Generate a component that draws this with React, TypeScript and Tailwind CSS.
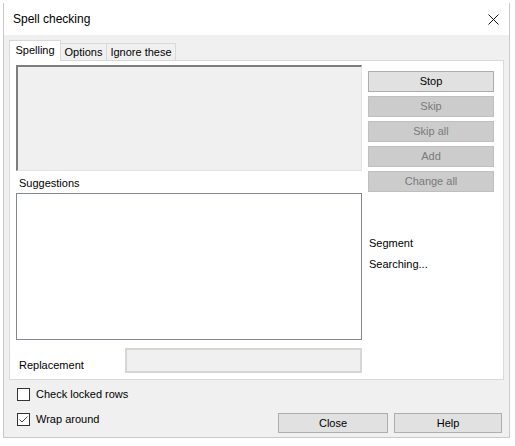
import React from 'react';

const sideButtons = [
  { label: 'Stop', enabled: true },
  { label: 'Skip', enabled: false },
  { label: 'Skip all', enabled: false },
  { label: 'Add', enabled: false },
  { label: 'Change all', enabled: false },
];

function CheckBox({ checked, label }: { checked?: boolean; label: string }) {
  return (
    <div className="flex items-center h-[13px]">
      <div className="w-[13px] h-[13px] border border-[#333333] bg-white flex items-center justify-center">
        {checked && (
          <svg width="11" height="11" viewBox="0 0 11 11">
            <polyline points="1.5,5.5 4,8 9.5,2.5" fill="none" stroke="#444444" strokeWidth="1" />
          </svg>
        )}
      </div>
      <span className="ml-[6px] leading-[13px]">{label}</span>
    </div>
  );
}

export default function App() {
  return (
    <div className="w-[515px] h-[446px] bg-white text-[11px] text-black font-['Liberation_Sans',Arial,sans-serif] overflow-hidden">
      <div className="ml-[3px] mt-[3px] w-[507px] border-x border-[#c9c9c9]">
        {/* title bar */}
        <div className="h-[32px] bg-white flex items-center justify-between pl-[9px] pr-[9px]">
          <span className="text-[12px]">Spell checking</span>
          <svg width="11" height="11" viewBox="0 0 11 11" className="mr-[1px]">
            <line x1="0.5" y1="0.5" x2="10.5" y2="10.5" stroke="#111" strokeWidth="1" />
            <line x1="10.5" y1="0.5" x2="0.5" y2="10.5" stroke="#111" strokeWidth="1" />
          </svg>
        </div>

        {/* body */}
        <div className="h-[403px] bg-[#f0f0f0] border-b border-[#c9c9c9] pt-[5px] pl-[5px]">
          {/* tabs */}
          <div className="flex items-end h-[20px]">
            <div className="relative z-10 w-[52px] h-[21px] -mb-px bg-white border border-b-0 border-[#d9d9d9] flex items-center justify-center pb-[2px]">
              Spelling
            </div>
            <div className="w-[46px] h-[17px] bg-[#f0f0f0] border border-l-0 border-b-0 border-[#d9d9d9] flex items-center justify-center">
              Options
            </div>
            <div className="w-[69px] h-[17px] bg-[#f0f0f0] border border-l-0 border-b-0 border-[#d9d9d9] flex items-center justify-center">
              Ignore these
            </div>
          </div>

          {/* tab panel */}
          <div className="w-[495px] h-[320px] bg-white border border-[#d9d9d9] pl-[6px] pt-[4px] flex">
            <div className="w-[346px] flex flex-col">
              <div className="h-[106px] bg-[#f0f0f0] border-t-2 border-l-2 border-r border-b border-t-[#7d7d7d] border-l-[#7d7d7d] border-r-[#e3e3e3] border-b-[#e3e3e3]" />
              <div className="h-[22px] flex items-center pl-[3px] pt-[3px]">Suggestions</div>
              <div className="h-[147px] bg-white border border-[#828790]" />
              <div className="mt-[8px] flex items-end">
                <div className="w-[109px] pl-[3px] pb-[1px] leading-[13px]">Replacement</div>
                <div className="w-[237px] h-[25px] bg-[#f0f0f0] border-2 border-[#d6d6d6]" />
              </div>
            </div>

            <div className="ml-[6px] w-[126px] flex flex-col">
              <div className="mt-[6px] flex flex-col gap-[4px]">
                {sideButtons.map((b) => (
                  <div
                    key={b.label}
                    className={
                      b.enabled
                        ? 'h-[21px] bg-[#e1e1e1] border border-[#adadad] flex items-center justify-center'
                        : 'h-[21px] bg-[#cccccc] border border-[#bfbfbf] text-[#7a7a7a] flex items-center justify-center'
                    }
                  >
                    {b.label}
                  </div>
                ))}
              </div>
              <div className="mt-[44px] pl-[1px] leading-[14px]">Segment</div>
              <div className="mt-[7px] pl-[1px] leading-[14px]">Searching...</div>
            </div>
          </div>

          {/* bottom */}
          <div className="pl-[8px] pr-[7px] mt-[8px]">
            <CheckBox label="Check locked rows" />
            <div className="mt-[12px] flex justify-between items-start">
              <CheckBox checked label="Wrap around" />
              <div className="flex gap-[6px]">
                <div className="w-[110px] h-[20px] bg-[#e1e1e1] border border-[#adadad] flex items-center justify-center">
                  Close
                </div>
                <div className="w-[108px] h-[20px] bg-[#e1e1e1] border border-[#adadad] flex items-center justify-center">
                  Help
                </div>
              </div>
            </div>
          </div>
        </div>
      </div>
    </div>
  );
}
